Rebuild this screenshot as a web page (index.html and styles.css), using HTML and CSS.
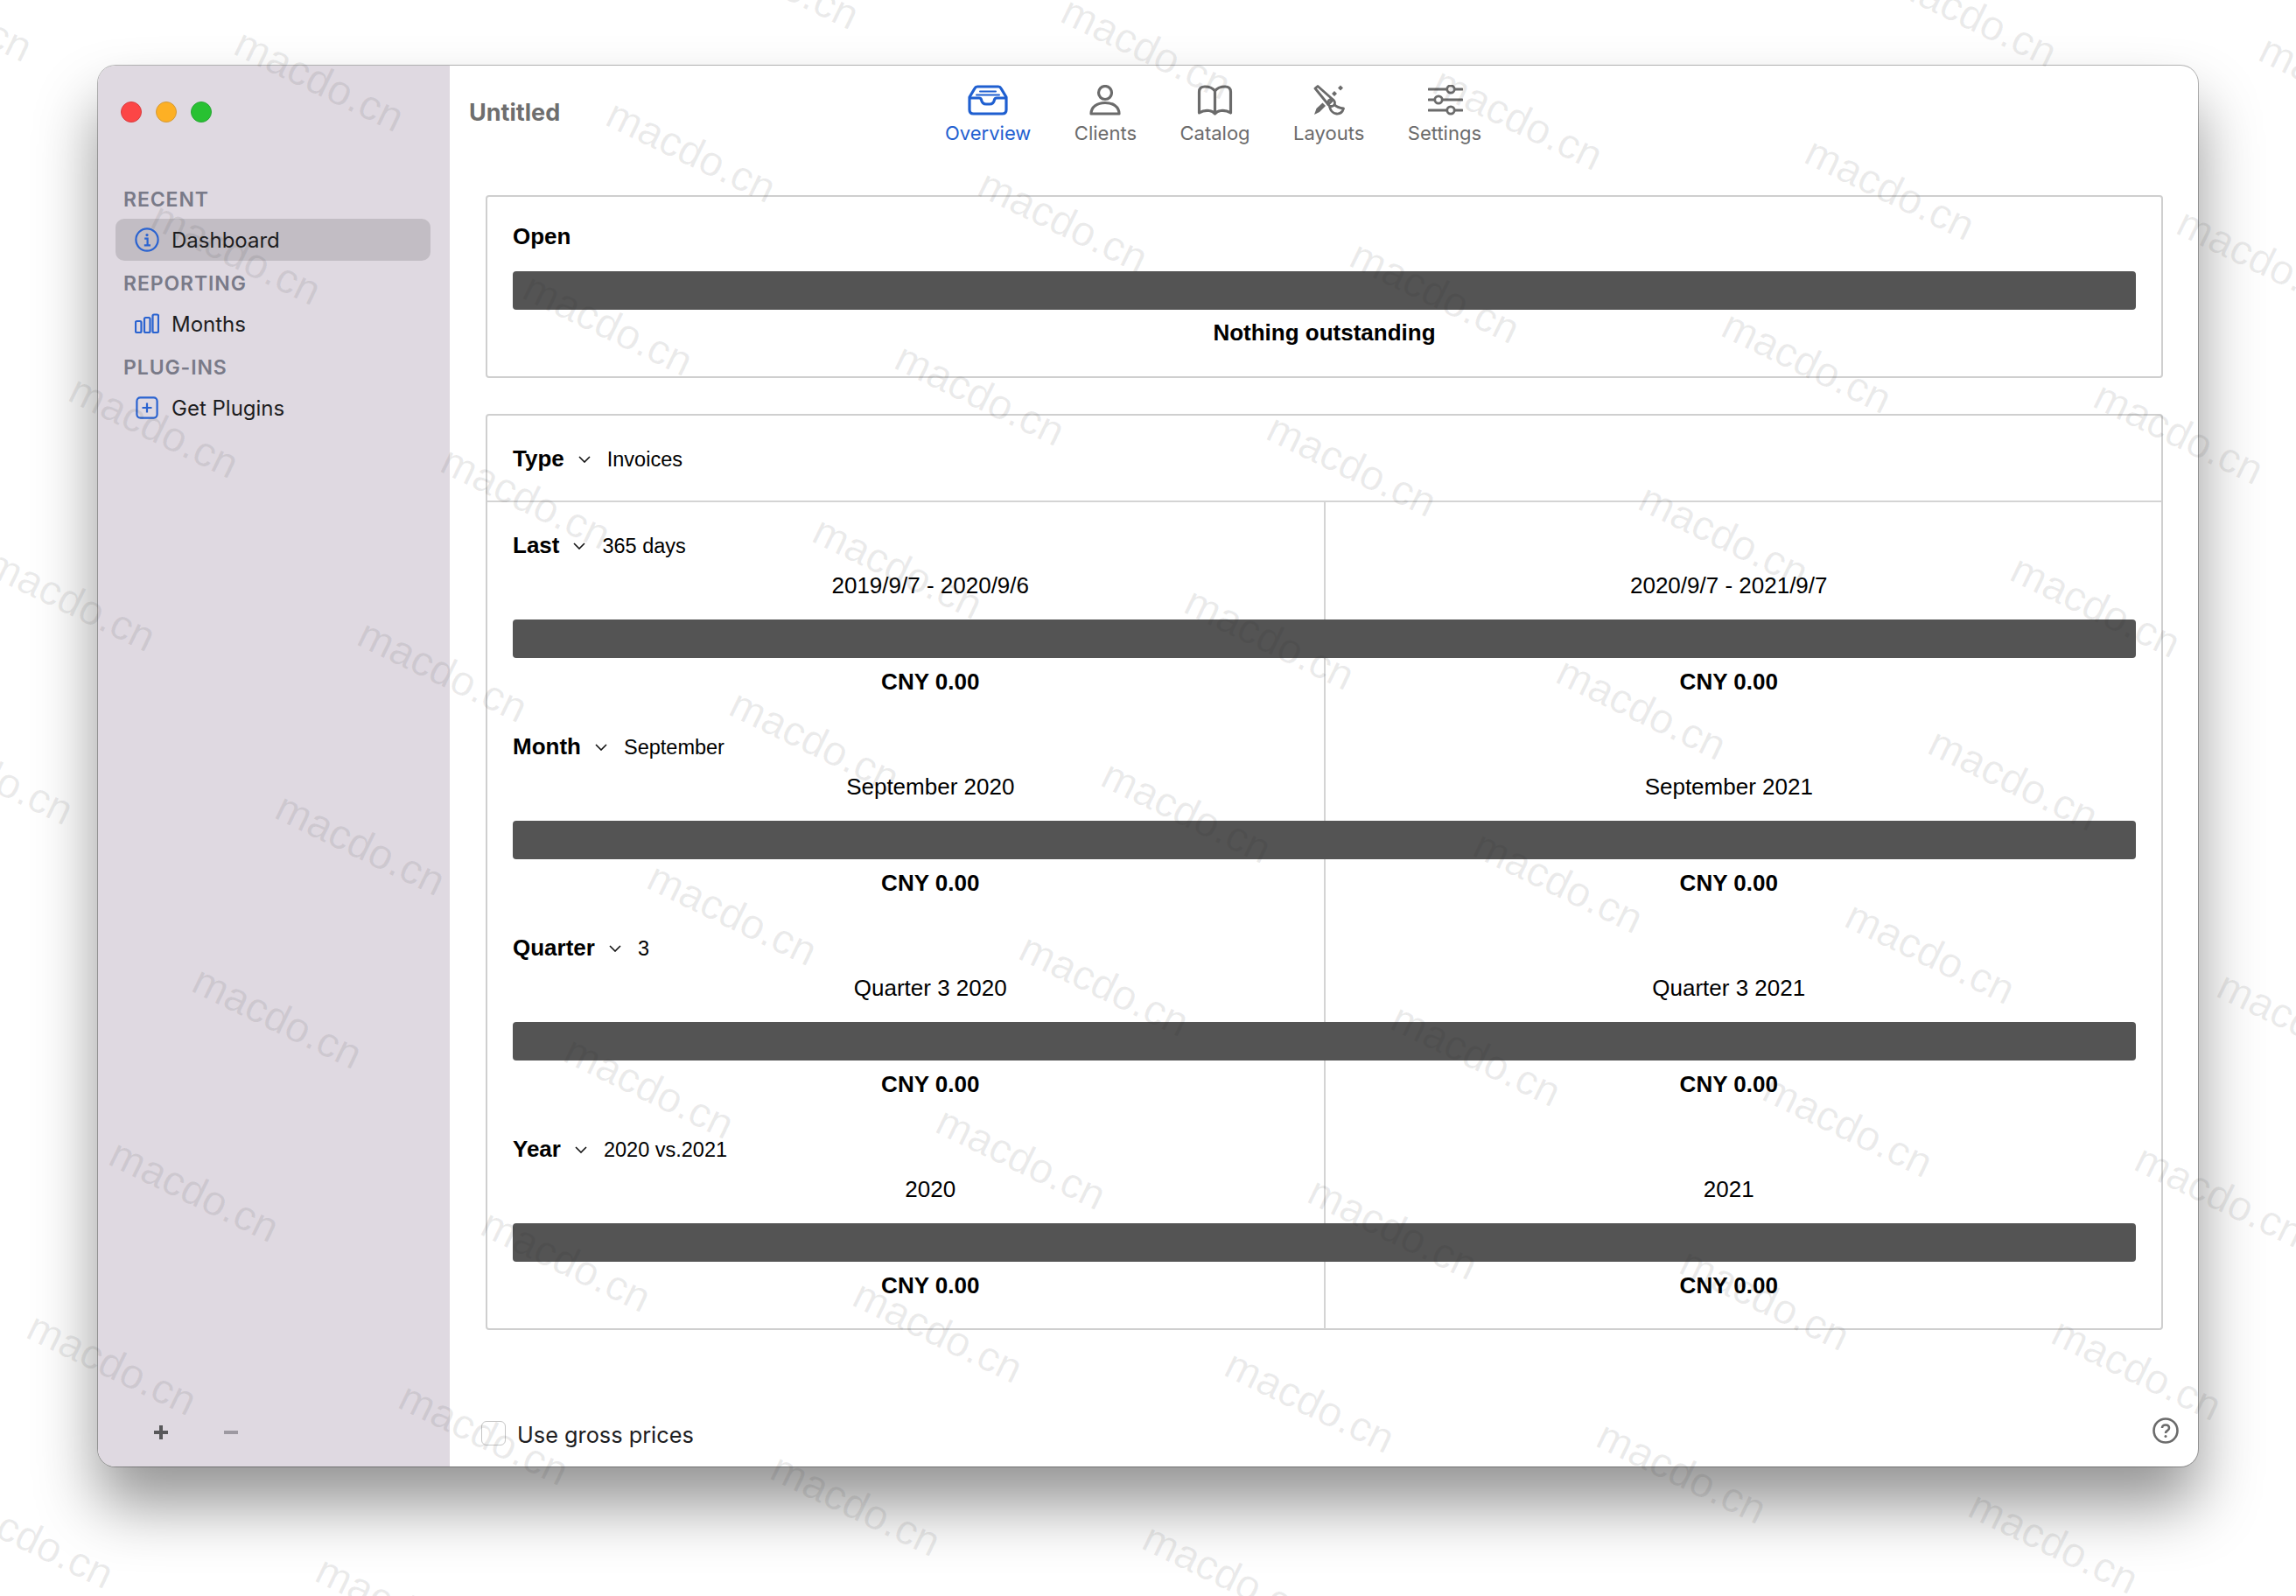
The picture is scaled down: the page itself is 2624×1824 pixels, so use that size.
FILE: index.html
```html
<!DOCTYPE html>
<html lang="en">
<head>
    <meta charset="UTF-8">
    <title>Untitled - Dashboard</title>
    <link rel="stylesheet" href="styles.css">
</head>
<body>
    <div class="window">
        <!-- Sidebar -->
        <aside class="sidebar">
            <div class="traffic">
                <span class="light red"></span>
                <span class="light yellow"></span>
                <span class="light green"></span>
            </div>
            <div class="side-head">RECENT</div>
            <div class="side-item selected">
                <svg class="side-icon" viewBox="0 0 28 28"><circle cx="14" cy="14" r="12.6"/><circle class="fill" cx="14" cy="8.6" r="1.6"/><path d="M11.2 12.6H14.6V20M10.8 20.4H18"/></svg>
                Dashboard
            </div>
            <div class="side-head">REPORTING</div>
            <div class="side-item">
                <svg class="side-icon" viewBox="0 0 28 28"><rect x="1" y="11" width="6.5" height="13" rx="1.5"/><rect x="11" y="7" width="6.5" height="17" rx="1.5"/><rect x="20.5" y="3.5" width="6.5" height="20.5" rx="1.5"/></svg>
                Months
            </div>
            <div class="side-head">PLUG-INS</div>
            <div class="side-item">
                <svg class="side-icon" viewBox="0 0 28 28"><rect x="2.4" y="2.4" width="23.2" height="23.2" rx="4"/><path d="M14 8.5V19.5M8.5 14H19.5"/></svg>
                Get Plugins
            </div>
            <div class="side-foot">
                <svg class="foot-btn" viewBox="0 0 18 18"><path d="M9 1V17M1 9H17"/></svg>
                <svg class="foot-btn off" viewBox="0 0 18 18"><path d="M1 9H17"/></svg>
            </div>
        </aside>

        <main class="main">
            <!-- Toolbar -->
            <header class="toolbar">
                <div class="doc-title">Untitled</div>
                <nav class="tabs">
                    <div class="tab active">
                        <svg width="46" height="35" viewBox="0 0 46 35"><path d="M11 2H35Q37 2 38 4L44 14V28.500Q44 33 39.500 33H6.500Q2 33 2 28.500V14L8 4Q9 2 11 2Z"/><path d="M2.500 15H13Q15 15 15.500 17Q16.500 22 21 22H25Q29.500 22 30.500 17Q31 15 33 15H43.500"/><path d="M14 7.500H32M10 11.500H36" class="thin"/></svg>
                        <span>Overview</span>
                    </div>
                    <div class="tab">
                        <svg width="36" height="35" viewBox="0 0 36 35"><circle cx="18" cy="9" r="7.500"/><path d="M2 33C2 25 9 20.500 18 20.500S34 25 34 33Z"/></svg>
                        <span>Clients</span>
                    </div>
                    <div class="tab">
                        <svg width="41" height="35" viewBox="0 0 41 35"><path d="M20.500 7C18 3.500 14 2 9 2Q2.500 2 2.500 8V32Q8 28.500 14 29.500Q18 30 20.500 33Q23 30 27 29.500Q33 28.500 38.500 32V8Q38.500 2 32 2C27 2 23 3.500 20.500 7ZM20.500 7V33"/></svg>
                        <span>Catalog</span>
                    </div>
                    <div class="tab">
                        <svg width="36" height="35" viewBox="0 0 36 35"><path d="M2 4L5 1.500L22.500 17L17 22.500Z" class="mid"/><circle cx="20.500" cy="20.500" r="4" class="mid"/><path d="M24 22.500Q27 26 34.500 27Q32.500 33.500 26.500 33Q20.500 32.500 18.500 25" class="mid"/><path d="M1 34L3.500 27L10.500 20.500L14 24L7 31Z" class="solid"/><path d="M21 10L24 7L27 10L24 13ZM28 3.500L31 .5L34 3.500L31 6.500Z" class="solid"/></svg>
                        <span>Layouts</span>
                    </div>
                    <div class="tab">
                        <svg class="nudged" width="40" height="35" viewBox="0 0 40 35"><path d="M1 5H21M31 5H39M1 17H7M17 17H39M1 29H21M31 29H39"/><circle cx="26" cy="5" r="4.200" class="mid"/><circle cx="12" cy="17" r="4.200" class="mid"/><circle cx="26" cy="29" r="4.200" class="mid"/></svg>
                        <span>Settings</span>
                    </div>
                </nav>
            </header>

            <!-- Open invoices -->
            <section class="box open-box">
                <div class="label">Open</div>
                <div class="bar"></div>
                <div class="caption">Nothing outstanding</div>
            </section>

            <!-- Comparison by period -->
            <section class="box compare-box">
                <div class="type-row">
                    <span class="label">Type</span>
                    <svg class="chevron" viewBox="0 0 14 8"><path d="M1 1L7 7L13 1"/></svg>
                    <span class="value">Invoices</span>
                </div>
                <div class="periods">
                    <div class="period">
                        <div class="period-head">
                            <span class="label">Last</span>
                            <svg class="chevron" viewBox="0 0 14 8"><path d="M1 1L7 7L13 1"/></svg>
                            <span class="value">365 days</span>
                        </div>
                        <div class="pair dates"><span>2019/9/7 - 2020/9/6</span><span>2020/9/7 - 2021/9/7</span></div>
                        <div class="bar"></div>
                        <div class="pair amounts"><span>CNY 0.00</span><span>CNY 0.00</span></div>
                    </div>
                    <div class="period">
                        <div class="period-head">
                            <span class="label">Month</span>
                            <svg class="chevron" viewBox="0 0 14 8"><path d="M1 1L7 7L13 1"/></svg>
                            <span class="value">September</span>
                        </div>
                        <div class="pair dates"><span>September 2020</span><span>September 2021</span></div>
                        <div class="bar"></div>
                        <div class="pair amounts"><span>CNY 0.00</span><span>CNY 0.00</span></div>
                    </div>
                    <div class="period">
                        <div class="period-head">
                            <span class="label">Quarter</span>
                            <svg class="chevron" viewBox="0 0 14 8"><path d="M1 1L7 7L13 1"/></svg>
                            <span class="value">3</span>
                        </div>
                        <div class="pair dates"><span>Quarter 3 2020</span><span>Quarter 3 2021</span></div>
                        <div class="bar"></div>
                        <div class="pair amounts"><span>CNY 0.00</span><span>CNY 0.00</span></div>
                    </div>
                    <div class="period">
                        <div class="period-head">
                            <span class="label">Year</span>
                            <svg class="chevron" viewBox="0 0 14 8"><path d="M1 1L7 7L13 1"/></svg>
                            <span class="value">2020 vs.2021</span>
                        </div>
                        <div class="pair dates"><span>2020</span><span>2021</span></div>
                        <div class="bar"></div>
                        <div class="pair amounts"><span>CNY 0.00</span><span>CNY 0.00</span></div>
                    </div>
                </div>
            </section>

            <!-- Footer -->
            <footer class="main-foot">
                <span class="checkbox"></span>
                <span class="check-label">Use gross prices</span>
                <svg class="help" viewBox="0 0 30 30"><circle cx="15" cy="15" r="13.500"/><path d="M11 12Q11 8.500 15 8.500T19 12Q19 14 17 15T15 18"/><circle class="dot" cx="15" cy="21.500" r="1.500"/></svg>
            </footer>
        </main>
    </div>

    <div class="watermarks" id="watermarks"></div>
    <script src="watermark.js"></script>
</body>
</html>
```

FILE: styles.css
```css
/* General page */
body {
    margin: 0;
    width: 2624px;
    height: 1824px;
    padding: 75px 0 0 112px;
    box-sizing: border-box;
    background-color: #ffffff;
    font-family: "Liberation Sans", Arial, sans-serif;
    color: #000;
    overflow: hidden;
}

/* App window */
.window {
    display: flex;
    width: 2400px;
    height: 1601px;
    border-radius: 20px;
    background-color: #fff;
    overflow: hidden;
    box-shadow: 0 0 0 1px rgba(0, 0, 0, 0.28), 0 44px 70px rgba(0, 0, 0, 0.42);
}

/* Sidebar */
.sidebar {
    display: flex;
    flex-direction: column;
    width: 402px;
    flex-shrink: 0;
    background-color: #dfd9e1;
    font-family: Inter, "Noto Sans", sans-serif;
}

.traffic {
    display: flex;
    gap: 16px;
    height: 127px;
    padding: 41px 0 0 26px;
    box-sizing: border-box;
}

.light {
    width: 24px;
    height: 24px;
    border-radius: 50%;
    box-sizing: border-box;
}

.red { background-color: #fc4646; border: 1px solid #d83c40; }
.yellow { background-color: #fdb024; border: 1px solid #d49a3a; }
.green { background-color: #28c132; border: 1px solid #2aa536; }

.side-head {
    height: 48px;
    line-height: 52px;
    padding-left: 29px;
    font-size: 23px;
    font-weight: 600;
    letter-spacing: 0.9px;
    color: #797a88;
}

.side-item {
    display: flex;
    align-items: center;
    gap: 14px;
    height: 48px;
    margin: 0 22px 0 20px;
    padding-left: 22px;
    border-radius: 10px;
    font-size: 24px;
    color: #1d1d1f;
}

.side-item.selected {
    background-color: #c2bdc4;
}

.side-icon {
    width: 28px;
    height: 28px;
    fill: none;
    stroke: #2a63d0;
    stroke-width: 2.2;
}

.side-icon .fill {
    fill: #2a63d0;
    stroke: none;
}

.side-foot {
    display: flex;
    gap: 62px;
    margin-top: auto;
    padding: 0 0 30px 63px;
}

.foot-btn {
    width: 18px;
    height: 18px;
    fill: none;
    stroke: #58585a;
    stroke-width: 4;
}

.foot-btn.off {
    stroke: #9d99a1;
}

/* Main area */
.main {
    display: flex;
    flex-direction: column;
    flex: 1;
    padding: 0 40px 0 41px;
    box-sizing: border-box;
}

.toolbar {
    display: flex;
    height: 148px;
    margin-left: -19px;
    flex-shrink: 0;
}

.doc-title {
    width: 544px;
    padding-top: 38px;
    font-family: Inter, sans-serif;
    font-size: 27px;
    font-weight: 700;
    line-height: 32px;
    color: #6e6e6e;
}

.tabs {
    display: flex;
    gap: 49.5px;
    padding-top: 22px;
}

.tab {
    display: flex;
    flex-direction: column;
    align-items: center;
    gap: 5px;
    font-family: Inter, sans-serif;
    font-size: 22px;
    line-height: 30px;
    color: #6b6b6b;
}

.tab svg {
    fill: none;
    stroke: #6b6b6b;
    stroke-width: 3.2;
    stroke-linejoin: round;
    stroke-linecap: round;
}

.tab svg.nudged { margin-left: 3px; }
.tab svg .thin { stroke-width: 2; }
.tab svg .mid { stroke-width: 2.8; }
.tab svg .solid { fill: #6b6b6b; stroke: none; }

.tab.active {
    color: #1f5fd0;
}

.tab.active svg {
    stroke: #1f5fd0;
}

/* Boxes */
.box {
    border: 2px solid #cfcfcf;
    border-radius: 4px;
    box-sizing: border-box;
}

.label {
    font-size: 26px;
    font-weight: 700;
    line-height: 32px;
}

.bar {
    height: 44px;
    background-color: #545454;
    border-radius: 4px;
}

.open-box {
    height: 209px;
    padding: 29px 29px 0;
    margin-bottom: 41px;
}

.open-box .bar {
    margin-top: 24px;
}

.caption {
    margin-top: 10px;
    font-size: 26px;
    font-weight: 700;
    line-height: 32px;
    text-align: center;
}

.compare-box {
    height: 1047px;
}

.type-row, .period-head {
    display: flex;
    align-items: center;
}

.type-row {
    height: 97px;
    padding-left: 29px;
    border-bottom: 2px solid #d4d4d4;
}

.period-head {
    height: 32px;
}

.chevron {
    width: 14px;
    height: 8px;
    margin: 2px 19px 0 16px;
    fill: none;
    stroke: #111;
    stroke-width: 1.6;
}

.value {
    font-size: 23.5px;
    line-height: 32px;
    padding-top: 2px;
}

/* Two columns split by a thin line down the middle */
.periods {
    padding: 33px 29px 0;
    background: linear-gradient(#d4d4d4, #d4d4d4) 956px 0 / 2px 100% no-repeat;
    height: 945px;
    box-sizing: border-box;
}

.period {
    margin-bottom: 42px;
}

.pair {
    display: grid;
    grid-template-columns: 1fr 1fr;
    margin: 0 9px 0 21px;
    font-size: 26px;
    line-height: 32px;
    text-align: center;
}

.pair.dates {
    margin-top: 14px;
    margin-bottom: 23px;
}

.pair.amounts {
    margin-top: 11px;
    font-weight: 700;
}

/* Footer */
.main-foot {
    display: flex;
    align-items: center;
    margin-top: auto;
    height: 66px;
    padding: 0 0 10px 0;
    margin-left: -5px;
    margin-right: -18px;
    box-sizing: border-box;
}

.checkbox {
    width: 28px;
    height: 28px;
    border: 1.5px solid #c6c6c6;
    border-radius: 6px;
    box-sizing: border-box;
}

.check-label {
    margin-left: 13px;
    padding-top: 2px;
    font-family: Inter, sans-serif;
    font-size: 25.3px;
    color: #1d1d1f;
}

.help {
    width: 30px;
    height: 30px;
    margin-left: auto;
    margin-top: -6px;
    fill: none;
    stroke: #6b6b6b;
    stroke-width: 2.6;
}

.help .dot {
    fill: #6b6b6b;
    stroke: none;
}

/* Watermark layer, lies over the whole picture */
.watermarks {
    position: absolute;
    top: 0;
    left: 0;
    width: 2624px;
    height: 1824px;
    overflow: hidden;
    pointer-events: none;
}

.watermark {
    position: absolute;
    font-family: "Liberation Sans", Arial, sans-serif;
    font-size: 48px;
    line-height: 50px;
    white-space: nowrap;
    color: rgba(40, 40, 40, 0.09);
    transform: translate(-50%, -50%) rotate(26deg);
}
```

FILE: watermark.js
```js
// The watermark repeats on a slanted lattice
const layer = document.getElementById('watermarks');

for (let row = -3; row < 12; row++) {
    for (let col = -3; col < 9; col++) {
        const x = 365 + col * 425 - row * 94.6;
        const y = 92 + col * 80.5 + row * 198;
        if (x < -150 || x > 2774 || y < -100 || y > 1924) continue;

        const mark = document.createElement('span');
        mark.className = 'watermark';
        mark.textContent = 'macdo.cn';
        mark.style.left = x + 'px';
        mark.style.top = y + 'px';
        layer.appendChild(mark);
    }
}
```
